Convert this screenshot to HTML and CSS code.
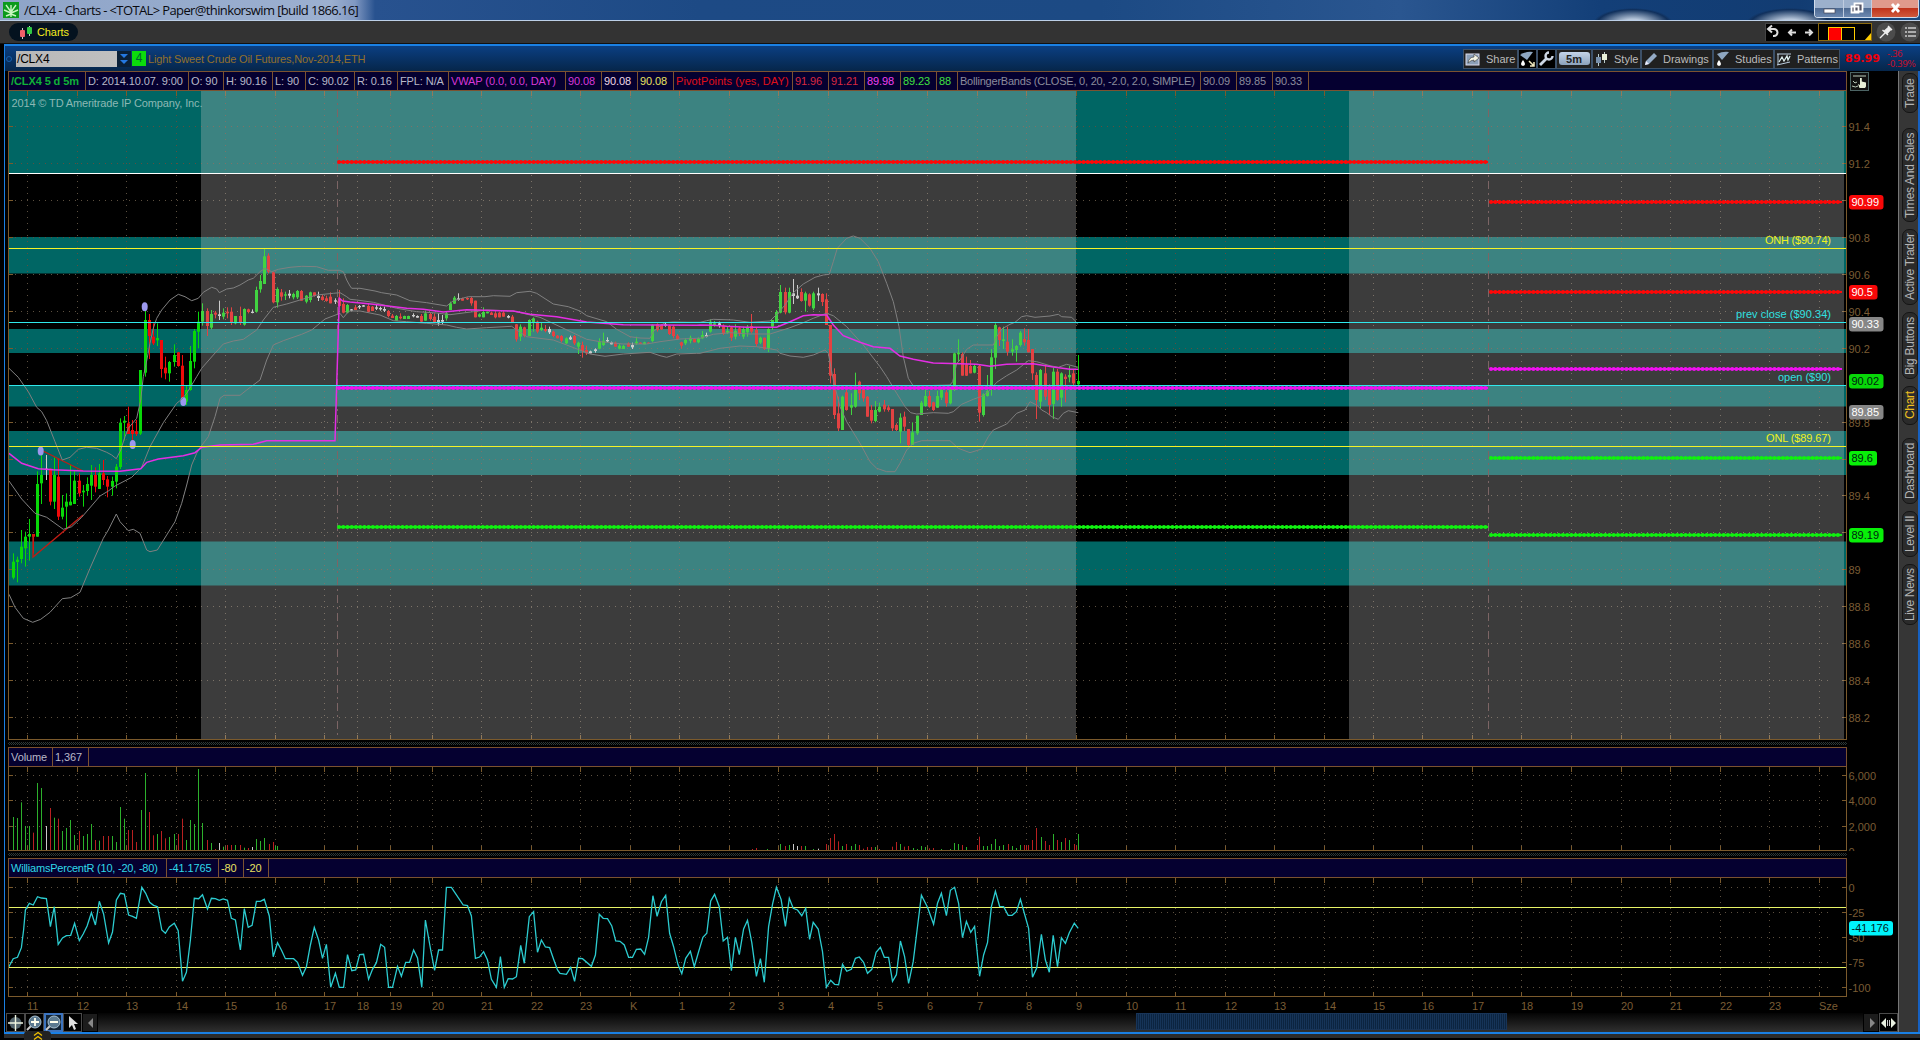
FILE: index.html
```html
<!DOCTYPE html>
<html lang="en">
<head>
<meta charset="utf-8">
<title>/CLX4 - Charts</title>
<link rel="stylesheet" href="styles.css">
</head>
<body>
<header class="titlebar">
  <svg class="app-icon" width="16" height="16" viewBox="0 0 16 16"><rect width="16" height="16" fill="#0c9a1c"/><path d="M8 15V3M8 10L3 3M8 10l5-7M8 11L1 8M8 11l7-3M8 12l-5 2M8 12l5 2" stroke="#c8f5c0" stroke-width="1.4"/></svg>
  <span class="title-text">/CLX4 - Charts - &lt;TOTAL&gt; Paper@thinkorswim [build 1866.16]</span>
  <div class="win-buttons">
    <span class="win-btn min"><svg width="28" height="17"><rect x="9" y="9" width="11" height="4" fill="#fff" stroke="#445" stroke-width=".7"/></svg></span>
    <span class="win-btn max"><svg width="27" height="17"><path d="M10.500 3.500h8v8h-8z M7.500 6.500h7v6h-7z" fill="#556" stroke="#fff" stroke-width="1.800"/></svg></span>
    <span class="win-btn close"><svg width="46" height="17"><path d="M20 4l7 8M27 4l-7 8" stroke="#fff" stroke-width="2.800"/></svg></span>
  </div>
</header>

<nav class="menubar">
  <div class="charts-tab">
    <svg width="15" height="15"><path d="M3.500 3v11M10.500 1v10" stroke="#ccc"/><rect x="1" y="5" width="5" height="7" rx="1" fill="#f0606a"/><rect x="8" y="2" width="5" height="7" rx="1" fill="#30c845"/></svg>
    <span>Charts</span>
  </div>
  <div class="menu-right">
    <div class="nav-box">
      <svg width="52" height="17"><path d="M3 5h5a3.300 3.300 0 0 1 0 7H7M6 1.500L2 5l4 3.500" fill="none" stroke="#ddd" stroke-width="2"/><path d="M30 8.500h-7M26 5.500l-3 3 3 3M39 8.500h7M43 5.500l3 3-3 3" fill="none" stroke="#ddd" stroke-width="2"/></svg>
    </div>
    <div class="color-box">
      <svg width="52" height="17"><rect x="9.500" y="3.500" width="13" height="13" fill="#f00" stroke="#fc0"/><rect x="22.500" y="3.500" width="13" height="13" fill="#000" stroke="#fc0"/><path d="M52 9v8h-7z" fill="#fc0"/></svg>
    </div>
    <svg class="round" width="20" height="20"><circle cx="10" cy="10" r="9.500" fill="#4c4c4c"/><path d="M4 16l5-5M6.500 8l5.500 5M8.500 9L13 5l2 2-4 4.500zM12 4l4 4" stroke="#eee" stroke-width="1.400" fill="#eee"/></svg>
    <svg class="round list" width="20" height="20"><circle cx="10" cy="10" r="9.500" fill="#4c4c4c"/><path d="M5 6h2M8 6h8M5 10h2M8 10h8M5 14h2M8 14h8" stroke="#ccc" stroke-width="1.500"/></svg>
  </div>
</nav>

<section class="symbolbar">
  <i class="dot"></i>
  <span class="symbol">/CLX4</span>
  <span class="dropdown"><svg width="14" height="16"><path d="M3 3h8l-4 4zM3 9h8l-4 4z" fill="#2478e0"/></svg></span>
  <span class="link">4</span>
  <span class="desc">Light Sweet Crude Oil Futures,Nov-2014,ETH</span>
  <div class="tools">
    <span class="tool share"><svg width="16" height="16"><rect x="1" y="3" width="13" height="11" fill="#8ca0b8" stroke="#dde"/><path d="M3 12q1-6 6-6V3l5 4-5 4V9Q6 9 3 12z" fill="#f4f4e4" stroke="#333" stroke-width=".6"/></svg>Share</span>
    <span class="tool dark flask"><svg width="17" height="18"><path d="M1 5q6-4 13-3L8 10z" fill="#8ea6c0"/><path d="M4 10q4 5 0 6-4-1 0-6" fill="#fff"/><path d="M10 11l5 5M15 12v4h-4" stroke="#efe9c0" stroke-width="1.500" fill="none"/></svg></span>
    <span class="tool dark wrench"><svg width="17" height="18"><path d="M2 15l7-7" stroke="#ccd6e4" stroke-width="2.800"/><path d="M14.500 6a3.500 3.500 0 1 1-3.500-3.500" fill="none" stroke="#ccd6e4" stroke-width="2.400"/></svg></span>
    <span class="tool period"><b>5m</b></span>
    <span class="tool style"><svg width="15" height="16"><path d="M4.500 3v12M10.500 1v11" stroke="#bcc"/><rect x="2" y="6" width="5" height="6" fill="#7890ac"/><rect x="8" y="3" width="5" height="6" fill="#e8f0d8"/></svg>Style</span>
    <span class="tool drawings"><svg width="15" height="16"><path d="M2 14l1-4 8-8 3 3-8 8z" fill="#94abc6"/><path d="M2 14l1-4 3 3z" fill="#eef"/></svg>Drawings</span>
    <span class="tool studies"><svg width="15" height="17"><path d="M2 4q6-3 12-2L7 10z" fill="#8ea6c0"/><path d="M4 10q4 5 0 6-4-1 0-6" fill="#fff"/></svg>Studies</span>
    <span class="tool patterns"><svg width="16" height="16"><path d="M1 3h14M2 3v11M1 14l13-3" stroke="#bcd" fill="none"/><path d="M3 11l3-5 2 4 3-5 1 4 2-4" stroke="#dee" stroke-width="1.300" fill="none"/></svg>Patterns</span>
  </div>
  <b class="last">89.99</b>
  <span class="change">-.36<br>-0.39%</span>
</section>

<main class="workspace">
  <div class="panes">
    <div class="pane-head status">
      <span style="width:77px" class="green"><b>/CLX4 5 d 5m</b></span>
      <span style="width:103px">D: 2014.10.07. 9:00</span>
      <span style="width:35px">O: 90</span>
      <span style="width:49px">H: 90.16</span>
      <span style="width:33px">L: 90</span>
      <span style="width:49px">C: 90.02</span>
      <span style="width:43px">R: 0.16</span>
      <span style="width:51px">FPL: N/A</span>
      <span style="width:117px" class="mag">VWAP (0.0, 0.0, DAY)</span>
      <span style="width:36px" class="mag">90.08</span>
      <span style="width:36px" class="pink">90.08</span>
      <span style="width:36px" class="yel">90.08</span>
      <span style="width:119px" class="red">PivotPoints (yes, DAY)</span>
      <span style="width:36px" class="red2">91.96</span>
      <span style="width:36px" class="red2">91.21</span>
      <span style="width:36px" class="mag2">89.98</span>
      <span style="width:36px" class="lime">89.23</span>
      <span style="width:21px" class="lime">88</span>
      <span style="width:243px" class="gray long">BollingerBands (CLOSE, 0, 20, -2.0, 2.0, SIMPLE)</span>
      <span style="width:36px" class="gray">90.09</span>
      <span style="width:36px" class="gray">89.85</span>
      <span style="width:36px" class="gray">90.33</span>
      <svg class="hand" width="19" height="19"><rect x=".5" y=".5" width="18" height="18" fill="#111" stroke="#4c6464"/><path d="M3 4h13M3 9l2 2 2-1M2 14q4 2 6 0" stroke="#bcb" fill="none"/><path d="M9.500 16l-1.500-4 2 1V6h1.800v3.500l4.200 1v4l-1 1.500z" fill="#e8f0d8"/></svg>
    </div>
    <svg id="price" width="1890" height="649" viewBox="8 91 1890 649"></svg>
    <div class="splitter"></div>
    <div class="pane-head volume">
      <span style="width:44px">Volume</span><span style="width:36px">1,367</span>
    </div>
    <svg id="volume" width="1890" height="84" viewBox="8 767 1890 84"></svg>
    <div class="splitter"></div>
    <div class="pane-head williams">
      <span style="width:158px" class="cyan long">WilliamsPercentR (10, -20, -80)</span><span style="width:52px" class="cyan">-41.1765</span><span style="width:25px" class="yel">-80</span><span style="width:25px" class="yel">-20</span>
    </div>
    <svg id="williams" width="1890" height="135" viewBox="8 878 1890 135"></svg>
    <div class="footer">
      <span class="fbtn"><svg width="17" height="18"><circle cx="8.500" cy="9" r="6" fill="#53646c"/><path d="M8.500 1v16M1 9h15" stroke="#eef4e0" stroke-width="1.400"/></svg></span>
      <span class="fbtn"><svg width="17" height="18"><path d="M5 12l-4 4" stroke="#ccc" stroke-width="2"/><circle cx="9" cy="8" r="6" fill="#5c7a90" stroke="#a8c0d0"/><path d="M9 4v8M5 8h8" stroke="#ffe" stroke-width="1.800"/></svg></span>
      <span class="fbtn active"><svg width="17" height="18"><path d="M5 12l-4 4" stroke="#ccc" stroke-width="2"/><circle cx="9" cy="8" r="6" fill="#5c7a90" stroke="#a8c0d0"/><path d="M5 8h8" stroke="#ffe" stroke-width="2"/></svg></span>
      <span class="fbtn"><svg width="17" height="18"><path d="M5 2v12l3-3 2 5 2-1-2-5h4z" fill="#dcdcdc"/></svg></span>
      <span class="arrow"><svg width="15" height="18"><path d="M10 4v10L5 9z" fill="#888"/></svg></span>
      <div class="track"><i class="thumb"></i></div>
      <span class="arrow"><svg width="15" height="18"><path d="M6 4v10l5-5z" fill="#888"/></svg></span>
      <span class="fbtn"><svg width="17" height="18"><path d="M6 4v10L1 9zM11 4v10l5-5z" fill="#e8f0e0"/><path d="M7.500 6v6M9.500 6v6" stroke="#ccc"/></svg></span>
    </div>
  </div>
  <aside class="side">
    <span style="height:40px">Trade</span>
    <span style="height:94px" class="grp">Times And Sales</span>
    <span style="height:76px">Active Trader</span>
    <span style="height:67px">Big Buttons</span>
    <span style="height:39px" class="on">Chart</span>
    <span style="height:66px" class="grp2">Dashboard</span>
    <span style="height:46px">Level II</span>
    <span style="height:61px">Live News</span>
  </aside>
</main>
<div class="bottom-edge">
  <span class="pull"><svg width="10" height="9"><path d="M1 4.500l4-3 4 3M1 8.500l4-3 4 3" stroke="#f0c000" stroke-width="1.300" fill="none"/></svg></span>
</div>
<script src="chart.js"></script>
</body>
</html>
```
FILE: styles.css
```css
* { box-sizing: border-box; }
body { margin: 0; width: 1920px; height: 1040px; overflow: hidden; background: #000; font: 11px "Liberation Sans", Arial, sans-serif; display: flex; flex-direction: column; }
svg { display: block; flex: none; }
text { font: 11px "Liberation Sans", Arial, sans-serif; }

.titlebar { height: 21px; flex: none; display: flex; align-items: center; padding-left: 3px; border-bottom: 1px solid #bcd0e8;
  background: radial-gradient(ellipse 40px 16px at 1633px 24px, #b8c8dc 30%, #10305c 90%, transparent 100%), radial-gradient(ellipse 44px 16px at 1790px 24px, #b8c8dc 30%, #10305c 90%, transparent 100%), linear-gradient(90deg, #8ea4c8 0, #9cb0d0 330px, #8098c2 355px, #28528f 375px, #1d4a85 700px, #1c4a84 1100px, #2a5690 1400px, #133f78 1600px, #123c72 1800px, #1a4a80); }
.title-text { font: 13px "Open Sans", sans-serif; color: #0a0a10; margin-left: 5px; width: 335px; white-space: nowrap; letter-spacing: -.62px; position: relative; top: 0; }
.win-buttons { margin-left: auto; margin-right: 1px; display: flex; align-self: flex-start; border: 1px solid #d0dcec; border-top: 0; border-radius: 0 0 4px 4px; overflow: hidden; }
.win-btn { height: 17px; background: linear-gradient(#9cb0cc 0 45%, #4e6a92 50%, #6c88b0); border-right: 1px solid #c0cce0; }
.win-btn.close { background: linear-gradient(#e09a8c 0 45%, #c0341c 50%, #d05a3c); border: 0; }

.menubar { height: 23px; flex: none; background: #333; display: flex; align-items: center; justify-content: space-between; border-bottom: 1px solid #111; }
.charts-tab { margin-left: 9px; width: 69px; height: 18px; border-radius: 9px; background: #04121f; display: flex; align-items: center; padding-left: 10px; color: #f4ec20; gap: 3px; letter-spacing: -.1px; }
.menu-right { display: flex; align-items: center; height: 22px; }
.nav-box { width: 53px; height: 18px; background: #000; border: 1px solid #444; border-width: 1px 0 0 1px; }
.color-box { width: 54px; height: 18px; background: #000; border: 1px solid #8a6a10; margin-right: 4px; overflow: hidden; }
.round.list { margin-left: 4px; }

.symbolbar { height: 27px; flex: none; margin-left: 4px; border-top: 2px solid #1a80e4; border-left: 1px solid #1a80e4; background: linear-gradient(#0b3f82, #06264a); display: flex; align-items: center; padding-left: 1px; }
.dot { width: 6px; height: 6px; border: 1px solid #1660b0; border-radius: 3px; }
.symbol { width: 101px; height: 16px; margin-left: 4px; padding-left: 1px; background: linear-gradient(90deg, #b8b8b8, #c0c0c0); color: #000; font-size: 12px; line-height: 16px; letter-spacing: -.2px; }
.dropdown { width: 14px; height: 16px; background: #0a2038; }
.link { width: 14px; height: 15px; margin-left: 1px; background: #0cdc0c; color: #063; text-align: center; line-height: 15px; font-size: 12px; }
.desc { margin-left: 2px; color: #93702c; letter-spacing: -.14px; }
.tools { margin-left: auto; display: flex; }
.tool { height: 20px; display: flex; align-items: center; gap: 5px; padding-left: 1px; border: 1px solid #3c5068; background: #202020; color: #bcbcbc; font-size: 11px; }
.tool.dark { background: #000; padding: 0; }
.share { width: 55px; }
.flask, .wrench { width: 19px; }
.period { width: 36px; justify-content: center; padding: 0; }
.period b { width: 31px; height: 13px; border-radius: 3px; background: linear-gradient(#c4d4e8, #8ca2bc); color: #222; text-align: center; line-height: 14px; font-size: 11px; }
.style { width: 49px; }
.drawings { width: 72px; }
.studies { width: 61px; }
.patterns { width: 66px; }
.last { width: 42px; padding-left: 5px; color: #f00008; font: bold 11px "DejaVu Sans", sans-serif; }
.change { width: 38px; padding-left: 5px; color: #c0102c; font: 9px/10px "DejaVu Sans", sans-serif; letter-spacing: -.6px; white-space: nowrap; }

.workspace { display: flex; height: 961px; flex: none; border-left: 1px solid #1a80e4; margin-left: 4px; background: #000; }
.panes { width: 1893px; padding-left: 3px; flex: none; display: flex; flex-direction: column; }
.pane-head { flex: none; width: 1839px; height: 20px; background: #050030; border: 1px solid #7b5230; display: flex; }
.pane-head > span { flex: none; height: 18px; line-height: 18px; padding-left: 2px; border-right: 1px solid #7b5230; white-space: nowrap; overflow: visible; color: #b8b8c8; letter-spacing: -.1px; }
.status { position: relative; }
.hand { position: absolute; left: 1841px; top: 0; }
.pane-head .green { color: #10b038; } .pane-head .mag { color: #d838d8; } .pane-head .mag2 { color: #f040f0; }
.pane-head .pink { color: #f0d8e4; } .pane-head .yel { color: #e8e060; } .pane-head .red { color: #e01018; letter-spacing: .1px; }
.pane-head .red2 { color: #d82840; } .pane-head .lime { color: #40e040; } .pane-head .gray { color: #8c8c9c; } .pane-head .cyan { color: #30d8e8; }
.pane-head .long { letter-spacing: -.22px; }
.splitter { flex: none; width: 1839px; height: 7px; background: conic-gradient(#2c3838 25%, #000 0 50%, #2c3838 0 75%, #000 0) 0 0/2px 2px; border: solid #000; border-width: 2px 0; }
.footer { height: 19px; flex: none; display: flex; margin-left: -2px; background: linear-gradient(#040404, #303030); }
.fbtn { width: 19px; height: 19px; border: 1px solid #4a4a4a; background: #000; }
.fbtn.active { border: 2px solid #3c74c0; background: #123; }
.fbtn.active svg { margin: -1px; }
.arrow { width: 16px; background: #1c1c1c; border: 1px solid #000; }
.track { flex: 1; margin-left: 1px; padding-left: 1037px; }
.thumb { display: block; width: 371px; height: 17px; background: repeating-linear-gradient(90deg, #0c2440 0 1px, #163458 1px 2px); border: 1px solid #183458; }

.side { width: 22px; border-left: 1px solid #777; border-right: 2px solid #1660c0; background: #363636; padding: 2px 0 0 3px; display: flex; flex-direction: column; gap: 7px; }
.side span { width: 16px; flex: none; writing-mode: vertical-rl; transform: rotate(180deg); border: 1px solid #151515; border-radius: 7px; background: #2b2b2b; color: #b4b4b4; font-size: 12px; line-height: 14px; text-align: center; white-space: nowrap; letter-spacing: -.3px; }
.side .grp { margin-top: 8px; }
.side .grp2 { margin-top: 6px; }
.side .on { background: #2b2b2b; color: #f0c020; }

.bottom-edge { height: 8px; flex: none; margin-left: 4px; border-top: 2px solid #1a80e4; background: linear-gradient(#2c2c2c 0 4px, #000 4px); padding-left: 20px; }
.pull { display: flex; justify-content: center; position: relative; top: -3px; width: 27px; height: 10px; background: #222; border-radius: 4px 4px 0 0; }

.grid { stroke: #5c5040; stroke-width: 1; stroke-dasharray: 1 5; fill: none; }
.tick, .frame { stroke: #7b5a2c; stroke-width: 1; fill: none; }
.band { fill: #006664; }
.session { fill: #c8c8c8; fill-opacity: .3; }
.boll { fill: none; stroke: #808080; stroke-width: 1; }
.vwap { fill: none; stroke: #e42ee4; stroke-width: 1.5; }
.wpr { fill: none; stroke: #2cccd0; stroke-width: 1.3; }
.pivot { stroke-width: 4; stroke-linecap: round; stroke-dasharray: .1 4.13; fill: none; }
.axis { fill: #7a5c34; }
```
FILE: chart.js
```js
const NS = 'http://www.w3.org/2000/svg';
const LEFT = 9, RIGHT = 1846;
const COLORS = { g: '#08d808', r: '#f00a0a', w: '#cfcfcf' };

function add(parent, tag, attrs, text) {
  const el = document.createElementNS(NS, tag);
  for (const k in attrs) el.setAttribute(k, attrs[k]);
  if (text !== undefined) el.textContent = text;
  parent.appendChild(el);
  return el;
}
const line = (p, x1, y1, x2, y2, attrs) => add(p, 'line', { x1, y1, x2, y2, ...attrs });

// Converts "x,y x,y ..." given in local units into chart coordinates.
function pts(str, ox, oy, sx, sy) {
  return str.trim().split(/\s+/).map(s => {
    const [x, y] = s.split(',').map(Number);
    return (ox + x / sx).toFixed(1) + ',' + (oy + y / sy).toFixed(1);
  }).join(' ');
}

const HOURS = [[27.5,'11'],[77.5,'12'],[126.5,'13'],[176.5,'14'],[225.5,'15'],[275.5,'16'],[324.5,'17'],[357.5,'18'],[390.5,'19'],[432.5,'20'],[481.5,'21'],[531.5,'22'],[580.5,'23'],[630.5,'K'],[679.5,'1'],[729.5,'2'],[778.5,'3'],[828.5,'4'],[877.5,'5'],[927.5,'6'],[977.5,'7'],[1026.5,'8'],[1076.5,'9'],[1126.5,'10'],[1175.5,'11'],[1225.5,'12'],[1274.5,'13'],[1324.5,'14'],[1373.5,'15'],[1422.5,'16'],[1472.5,'17'],[1521.5,'18'],[1571.5,'19'],[1621.5,'20'],[1670.5,'21'],[1720.5,'22'],[1769.5,'23'],[1819.5,'Sze']];

function grid(svg, top, bottom, ys) {
  HOURS.forEach(([x]) => {
    line(svg, x, top, x, bottom, { class: 'grid' });
    line(svg, x, top, x, top + 5, { class: 'tick' });
    line(svg, x, bottom - 4, x, bottom, { class: 'tick' });
  });
  ys.forEach(y => {
    line(svg, LEFT, y, 1833, y, { class: 'grid' });
    line(svg, LEFT, y, LEFT + 4, y, { class: 'tick' });
    line(svg, RIGHT - 4, y, RIGHT, y, { class: 'tick' });
  });
}
function frame(svg, bottom, top) {
  line(svg, 8.5, top, 8.5, bottom, { class: 'frame' });
  line(svg, 1846.5, top, 1846.5, bottom, { class: 'frame' });
  line(svg, 8, bottom - .5, 1847, bottom - .5, { class: 'frame' });
}
function pill(svg, y, w, label, fill, color, x = 1849) {
  add(svg, 'rect', { x, y: y - 7, width: w, height: 14.5, rx: 3, fill });
  add(svg, 'text', { x: x + 2.5, y: y + 4, fill: color }, label);
}

/* ---------- price ---------- */
const price = document.getElementById('price');
const priceY = p => Math.round(273.8 + (90.6 - p) * 184.7) + .5;
[[91,82.5],[237,36.5],[329,24],[385.5,21],[431,44],[541.5,44]].forEach(([y, height]) =>
  add(price, 'rect', { x: LEFT, y, width: RIGHT - LEFT, height, class: 'band' }));
const levels = [];
for (let p = 91.4; p > 88.1; p -= .2) levels.push(+p.toFixed(1));
grid(price, 91, 739, levels.map(priceY));

// Bars: x, high, body top, body bottom, low, colour (one third of a pixel per unit).
function candles(ox, data) {
  data.trim().split(/\s*;\s*/).filter(Boolean).forEach(row => {
    const [x, h, t, b, l, c] = row.split(' ');
    const cx = Math.floor(ox + x / 3) + .5, y = v => 230 + v / 3;
    line(price, cx, y(h), cx, y(l), { stroke: COLORS[c] });
    add(price, 'rect', { x: cx - 1.5, y: y(t), width: 3, height: Math.max(1.3, (b - t) / 3), fill: COLORS[c] });
  });
}
candles(0, `40 970 995 1043 1048 g;52 980 989 996 1057 g;64 900 950 987 1000 g;76 905 920 955 1010 g;88 867 912 920 992 g;100 912 912 920 970 r;112 724 762 920 920 g;124 665 735 760 822 g;139 675 716 720 750 w;151 715 716 815 826 r;163 682 735 815 837 g;175 685 740 860 870 r;187 795 833 860 868 g;199 790 815 830 895 g;211 705 815 826 826 g;223 722 752 822 822 g;238 730 752 790 800 r;250 765 782 787 830 g;262 742 762 783 797 g;274 705 735 767 810 g;286 712 735 770 787 r;298 702 730 777 777 g;310 690 730 750 765 r;322 738 748 770 802 r;337 740 753 770 797 g;349 702 710 755 775 g;361 565 578 711 717 g;373 558 572 578 632 g;385 530 580 612 612 r;397 570 600 612 640 r;409 570 604 612 618 r;421 420 420 611 615 g;436 238 270 428 440 g;448 252 270 318 387 r;460 280 320 340 345 r;472 280 324 331 348 g;484 330 330 417 443 r;496 380 413 430 448 r;508 393 396 430 455 g;523 343 375 396 410 g;535 366 367 408 410 r;547 375 407 510 520 r;559 465 480 515 525 g;571 348 393 480 482 g;583 297 303 395 415 g;595 245 275 305 355 g;607 220 243 275 287 g;621 235 243 288 318 r;634 240 252 293 298 g;646 243 248 254 265 r;658 212 253 258 270 w;670 235 248 260 268 g;682 232 245 250 265 r;694 232 245 277 285 r;706 258 258 280 283 g;721 230 258 278 285 r;733 235 237 284 287 g;745 236 238 246 250 r;757 238 245 249 250 w;769 170 180 245 248 g;781 135 153 178 188 g;793 55 79 162 162 g;805 70 77 125 130 r;820 125 127 217 220 r;832 172 177 217 233 g;844 177 187 200 212 r;856 185 193 197 210 g;868 180 191 197 205 w;880 188 192 202 208 g;892 180 183 202 207 g;904 180 183 212 212 r;919 195 197 215 220 g;931 185 187 210 217 g;943 187 187 198 200 r;955 185 198 204 213 w;967 195 200 210 212 r;979 197 205 213 215 r;991 187 200 220 220 r;1006 205 211 215 222 w;1018 180 205 228 230 r;1030 205 222 248 250 r;1042 222 225 248 250 g`);
candles(340, `34 237 238 242 242 w;46 225 232 240 240 r;58 225 228 232 237 w;70 225 226 230 230 w;85 220 228 245 247 r;97 228 230 243 243 r;109 225 232 236 240 w;121 230 234 238 242 w;133 230 237 242 246 w;145 240 243 258 262 r;157 252 257 264 264 r;169 255 258 272 272 g;182 250 260 265 268 r;194 257 258 267 267 g;206 257 258 267 267 g;220 250 255 259 262 w;232 256 258 263 263 w;244 252 258 275 277 r;256 242 250 272 272 g;270 248 252 267 272 r;282 250 260 277 277 r;295 250 270 280 287 w;307 255 270 275 283 w;319 245 250 265 272 g;331 215 220 240 240 g;343 198 203 221 222 g;355 190 205 210 212 w;367 203 205 212 212 r;382 202 204 208 210 r;394 200 204 220 227 r;406 212 212 262 262 r;418 250 253 260 262 g;430 232 246 262 262 g;442 245 245 250 250 g;454 245 248 255 255 r;466 245 250 262 265 r;478 245 248 262 262 r;491 243 248 260 260 r;505 255 258 263 265 w;517 255 260 277 277 r;529 282 283 328 335 r;541 283 290 320 333 g;553 290 292 318 322 r;568 268 270 318 318 g;580 262 265 277 305 g;592 272 275 305 310 r;604 278 293 300 303 g;616 285 297 303 307 r;628 290 297 307 312 w;640 302 305 318 322 r;652 315 317 325 325 r;664 315 318 332 337 r;679 322 325 340 342 g;691 317 322 328 330 w;703 315 318 340 345 r;715 335 338 350 372 g;727 335 345 363 383 r;739 347 360 370 375 r;751 362 364 370 370 w;766 355 358 363 368 w;778 325 335 356 358 g;790 308 332 345 348 g;802 322 330 334 337 w;814 335 337 343 343 w;826 335 338 350 350 r;838 342 347 356 358 g;850 345 348 357 357 g;865 337 340 350 350 r;877 338 345 352 357 w;889 320 335 340 345 g;901 337 338 342 342 r;913 335 337 343 343 g;925 337 338 342 342 r;937 283 285 333 337 g;952 280 283 300 305 r;964 282 285 298 300 r;976 278 283 287 290 w;988 285 288 312 315 r;1000 285 290 318 325 r;1012 312 317 328 330 r;1024 335 337 347 355 r;1036 325 330 340 345 g;1051 317 323 332 340 g;1063 325 327 337 337 r;1075 322 325 337 340 g;1087 303 315 325 327 g;1099 308 315 320 322 w;1111 268 275 305 308 g;1123 273 280 285 290 g`);
candles(700, `57 275 280 285 293 w;70 283 287 312 315 r;82 290 303 308 312 g;94 290 292 323 333 r;106 283 303 320 328 g;118 290 295 310 318 r;130 290 297 320 327 g;142 285 290 307 320 g;154 252 288 305 310 r;168 293 300 342 350 r;181 320 323 338 342 g;193 323 323 357 360 r;205 295 297 356 366 g;217 270 270 290 300 g;229 240 246 278 278 g;241 165 186 248 250 g;256 173 186 247 253 r;268 173 186 248 250 g;280 147 190 198 222 w;292 165 197 205 207 w;304 175 186 213 215 r;316 185 190 212 245 g;328 190 193 227 230 r;340 185 190 235 240 g;355 173 190 196 213 w;367 190 192 216 228 r;379 190 208 285 285 r;391 285 285 437 460 r;403 415 432 555 567 r;415 500 550 595 603 r;427 497 500 600 600 g;439 478 487 540 542 r;454 490 525 533 555 g;466 428 480 530 533 g;478 452 455 490 510 r;490 475 480 505 515 r;502 498 500 560 560 r;514 525 540 572 580 r;526 513 540 573 577 g;538 518 530 545 547 g;553 510 524 538 545 r;565 525 532 540 545 r;577 537 537 595 603 r;589 580 585 600 603 r;601 550 563 605 640 g;613 545 560 590 603 r;625 597 597 645 648 r;637 577 607 645 645 g;652 557 557 610 615 g;664 513 518 555 555 g;676 477 498 528 530 g;688 483 498 530 533 r;700 515 517 540 543 r;712 482 498 533 533 g;724 477 480 503 510 g;739 480 487 520 530 r;751 477 478 520 523 g;763 368 370 480 483 g;775 328 368 373 397 g;787 367 372 437 437 r;799 380 403 437 438 r;811 390 408 430 430 r;823 402 408 428 430 g;838 405 408 548 575 r;850 490 493 555 560 g;862 435 483 498 500 g;874 357 382 470 497 g;886 280 285 383 417 g;898 290 292 330 348 r;910 290 328 333 357 g;922 290 335 365 377 r;937 328 358 365 377 g;949 345 348 360 395 g;961 303 308 345 350 g;973 295 327 337 347 r;985 297 330 367 367 r;997 357 357 430 450 r;1009 427 435 510 567 r;1021 417 420 515 535 g;1036 403 430 500 510 r;1048 463 470 525 555 r;1060 413 425 522 567 g;1072 417 425 510 512 r;1084 427 430 503 530 g;1096 433 440 447 517 r;1108 408 435 442 457 g;1120 420 430 460 470 r;1135 375 453 463 465 g`);

add(price, 'path', { d: 'M33 534V557L83 515M41 450L83 471', stroke: '#c01c14', 'stroke-width': 1.3, fill: 'none' });
[[144.7,306.7],[132.7,444.5],[40.7,451],[183.3,401.5]].forEach(([cx, cy]) => add(price, 'ellipse', { cx, cy, rx: 3, ry: 4.5, fill: '#9c98ee' }));
[337.5, 1488.5].forEach(x => line(price, x, 91, x, 739, { stroke: '#5c3c3c', 'stroke-dasharray': '8 4 2 4' }));
[[201, 1076], [1349, 1844]].forEach(([a, b]) => add(price, 'rect', { x: a, y: 91, width: b - a, height: 648, class: 'session' }));

add(price, 'polyline', { class: 'boll', points:
  pts(`27,415 55,442 85,485 110,532 125,545 140,572 165,635 187,690 210,682 235,658 260,652 290,655 320,667 335,675 349,686 362,660 375,620 385,595 410,565 422,510 430,440 437,408 450,340 460,295 470,265 485,240 510,210 535,193 555,200 575,212 595,205 610,187 635,172 650,177 658,188 680,177 700,174 720,165 745,150 760,145 780,125 795,115 815,125 835,118 870,112 905,109 950,110 985,121 1018,121 1030,125 1040,150 1050,168`, 0, 230, 3, 3) + ' ' +
  pts(`35,175 60,175 105,183 125,188 170,195 210,212 260,218 320,228 340,212 385,200 435,200 460,197 510,199 530,188 570,184 590,190 640,222 685,230 720,243 740,257 800,275 830,298 870,320 900,324 930,325 940,305 960,288 975,278 1000,276 1050,277 1080,277`, 340, 230, 3, 3) + ' ' +
  pts(`20,272 40,268 100,270 150,277 210,273 235,248 255,225 280,188 310,162 345,142 370,135 388,133 400,95 412,55 440,25 460,18 480,25 510,55 535,95 560,160 580,215 597,290 610,380 625,445 640,468 750,465 758,455 770,400 780,390 800,358 820,345 880,345 890,320 905,297 930,283 945,277 965,260 980,257 1005,262 1050,258 1075,253 1085,260 1115,262 1125,272 1133,283`, 700, 230, 3, 3) });
add(price, 'polyline', { class: 'boll', points:
  pts(`27,753 65,807 105,850 140,862 190,898 215,890 245,862 300,798 325,783 345,768 395,742 425,712 450,650 490,578 530,520 545,508 560,490 590,440 605,415 640,375 670,342 700,333 730,328 770,300 790,270 820,232 860,222 900,210 950,195 1000,190 1020,188 1040,200`, 0, 230, 3, 3) + ' ' +
  pts(`30,208 50,210 100,217 170,235 230,245 290,249 330,254 400,245 440,240 520,243 600,262 660,290 740,328 780,335 850,342 920,342 960,335 1020,327 1070,325`, 340, 230, 3, 3) + ' ' +
  pts(`0,325 40,313 90,308 150,312 210,312 270,293 310,278 340,265 379,250 400,257 440,290 490,345 540,410 560,440 590,490 615,530 632,548 650,552 700,548 745,550 760,545 785,523 820,508 850,497 870,480 890,457 920,437 950,420 985,392 1010,395 1050,407 1075,412 1100,403 1135,412`, 700, 230, 3, 3) });
add(price, 'polyline', { class: 'boll', points:
  pts(`27,1093 45,1132 70,1165 98,1177 122,1168 150,1147 187,1106 212,1103 240,1087 270,1015 310,925 325,900 349,852 360,875 385,902 400,898 420,910 432,940 440,960 450,965 472,960 500,915 525,875 545,820 560,765 575,705 590,670 600,653 625,620 645,560 660,505 672,496 720,496 740,480 780,450 800,390 820,345 850,332 905,313 935,300 975,267 1020,250 1030,263 1045,245`, 0, 230, 3, 3) + ' ' +
  pts(`30,243 60,243 120,255 160,272 200,275 260,280 320,285 350,292 380,297 440,293 515,289 530,300 560,320 640,330 680,345 750,372 795,379 850,372 930,367 960,377 980,382 1010,372 1070,370`, 340, 230, 3, 3) + ' ' +
  pts(`0,370 60,355 120,348 170,350 190,353 230,360 240,370 270,378 310,382 340,375 375,360 385,370 400,450 420,530 440,575 480,640 510,695 530,715 560,725 585,725 600,700 620,660 640,640 665,632 750,632 775,655 810,668 845,657 865,620 880,600 920,582 950,550 975,540 990,515 1010,525 1025,540 1040,548 1055,560 1075,568 1090,550 1105,542 1135,548`, 700, 230, 3, 3) });
add(price, 'polyline', { class: 'vwap', points:
  pts(`27,670 65,700 115,716 160,719 250,723 360,724 422,716 440,697 475,687 550,677 585,668 605,652 660,645 760,643 800,632 1005,632 1018,205 1028,213 1050,216`, 0, 230, 3, 3) + ' ' +
  pts(`100,223 200,235 250,238 310,246 380,239 430,241 520,243 570,253 650,260 740,276 850,284 1070,286`, 340, 230, 3, 3) + ' ' +
  pts(`0,285 40,286 80,289 140,292 230,292 270,275 310,257 340,254 380,255 400,285 430,317 480,337 520,350 570,355 600,378 640,388 700,399 830,403 870,409 920,403 1000,401 1060,411 1110,418 1135,418`, 700, 230, 3, 3) });

[[173.5,'#fff'],[248.5,'#f4f428'],[322.5,'#30e8ec'],[385.5,'#30e8ec'],[446.5,'#f4f428']].forEach(([y, stroke]) => line(price, LEFT, y, RIGHT, y, { stroke, 'stroke-width': 1.2 }));
[[338,1488,162,'#ff0808'],[338,1488,388,'#f010f0'],[338,1488,527,'#10f010'],[1490,1842,202,'#ff0808'],[1490,1842,292,'#ff0808'],[1490,1842,369,'#f010f0'],[1490,1842,458,'#10f010'],[1490,1842,535,'#10f010']].forEach(([a, b, y, stroke]) => {
  line(price, a, y, b, y, { stroke, 'stroke-width': 2 });
  line(price, a + 1, y, b, y, { stroke, class: 'pivot' });
});
[['ONH ($90.74)',244,'#f0f020',66],['prev close ($90.34)',318,'#30e0e0',95],['open ($90)',381,'#30e0e0',53],['ONL ($89.67)',442,'#f0f020',65]].forEach(([t, y, fill, w]) =>
  add(price, 'text', { x: 1831 - w, y, fill, textLength: w }, t));
add(price, 'text', { x: 11.5, y: 107, fill: '#8cb8b4', textLength: 191 }, '2014 © TD Ameritrade IP Company, Inc.');
frame(price, 740, 91);
levels.filter(p => ![91, 90, 89.6, 89.2].includes(p)).forEach(p => add(price, 'text', { x: 1848.5, y: priceY(p) + 4, class: 'axis' }, p));
pill(price, 202, 34.5, '90.99', '#f80808', '#fff');
pill(price, 292, 28.5, '90.5', '#f80808', '#fff');
pill(price, 324, 34.5, '90.33', '#868686', '#fff');
pill(price, 381, 34.5, '90.02', '#08d808', '#021');
pill(price, 412, 34.5, '89.85', '#868686', '#fff');
pill(price, 458, 28, '89.6', '#08f008', '#021');
pill(price, 535, 34.5, '89.19', '#08f008', '#021');

/* ---------- volume ---------- */
const volume = document.getElementById('volume');
grid(volume, 767, 850, [775.5, 800.5, 826.5]);
function bars(ox, data) {
  data.trim().split(/\s+/).forEach(s => {
    const [, x, y, c] = s.match(/(\d+):(\d+)(\w)/);
    const cx = Math.floor(ox + x / 2.8) + .5;
    line(volume, cx, 720 + y / 3, cx, 850, { stroke: { g: '#2cb02c', r: '#b82020', w: '#c8c8c8' }[c] });
  });
}
bars(0, '37:291g 49:294g 60:247g 71:318g 82:318g 93:338r 105:189g 116:204g 130:318w 141:264r 152:293g 163:296r 175:333g 186:324g 197:300g 208:345g 222:333r 233:348g 244:342g 256:312g 267:360r 278:362g 290:348r 303:348r 315:348g 326:366g 337:261g 348:296g 360:330r 371:330r 382:366r 396:270g 407:159g 418:276r 430:346r 441:342g 452:333r 463:355r 474:351g 488:342g 499:342r 511:296r 522:360g 533:300g 544:312g 556:147g 567:309g 580:360r 592:369g 603:387r 614:369w 625:380g 636:375r 648:375r 659:375g 673:375r 684:383g 695:384r 706:381w 718:357g 729:363g 740:354g 754:372r 765:366r 771:378g 777:378g');
bars(560, '540:387r 551:384r 582:387g 617:372g 632:378r 642:375g 653:372w 664:378w 676:378r 687:378g 709:387g 723:386w 746:372r 757:354r 768:342r 780:364r 791:378g 802:372r 816:378g 827:372g 838:375r 850:386r 861:381r 872:381r 884:381g 895:387r 930:380r 942:366r 953:372g 964:380r 976:378r 989:384g 1000:387g 1012:378g 1023:381g 1034:385r 1045:384r 1068:387g 1093:387g 1104:369g 1115:372g 1127:375r 1138:381g 1169:375r 1175:350r 1185:378g 1197:378g 1208:372g 1219:357g 1230:378g 1241:375g 1256:372r 1267:378g 1278:384g 1289:375g 1300:375r 1307:378r 1312:375r 1323:360r 1335:324r 1348:351g 1359:363r 1370:375r 1381:342g 1392:360r 1404:366g 1415:354r 1426:360g 1440:372r 1446:378r 1451:342g');
frame(volume, 851, 767);
[['6,000', 780], ['4,000', 805], ['2,000', 831], ['0', 856]].forEach(([t, y]) => add(volume, 'text', { x: 1848.5, y, class: 'axis' }, t));

/* ---------- Williams %R ---------- */
const wpr = document.getElementById('williams');
grid(wpr, 878, 996, [887.5, 912.5, 937.5, 962.5, 987.5]);
[907.5, 967.5].forEach(y => line(wpr, LEFT, y, RIGHT, y, { stroke: '#e8f468' }));
add(wpr, 'polyline', { class: 'wpr', points:
  pts(`25,740 37,716 49,712 60,683 66,630 71,570 82,550 93,555 105,530 116,534 130,536 141,620 152,560 163,673 175,654 186,647 198,646 209,610 222,662 233,642 244,618 256,578 267,615 278,544 290,582 304,669 315,636 326,540 337,520 348,522 360,585 371,589 382,595 397,502 408,520 419,547 430,556 441,560 453,630 463,640 474,621 488,610 499,632 511,784 522,757 533,660 544,535 556,536 567,524 581,567 592,535 603,536 614,541 625,537 637,541 648,595 659,600 673,690 684,566 695,622 706,616 718,544 729,544 740,538 754,588 765,710 777,668 788,690 799,716 822,716 833,727 847,766 858,740 869,675 880,622 892,660 903,715 914,673 926,802 939,760 950,802 962,802 973,704 985,752 996,750 1007,704 1018,703 1032,778 1043,748 1054,728 1066,673 1077,682 1088,802 1099,802 1113,739 1124,769 1136,727 1147,727 1158,690 1169,714 1181,802 1191,600 1206,690 1217,751 1228,690 1239,690 1250,502 1264,502 1275,520 1297,555 1309,557 1320,588 1331,715 1343,711 1354,695 1365,720 1376,778 1390,802 1401,710 1412,802 1423,776 1435,777 1446,770 1458,676 1468,730 1482,590 1494,575 1505,697 1516,660 1527,681 1539,683 1550,718 1561,750 1568,760`, 0, 720, 2.8, 3) + ' ' +
  pts(`18,763 30,742 41,784 52,715 63,716 88,739 99,705 110,583 121,595 133,596 145,618 156,663 168,664 180,675 192,712 203,712 214,688 226,687 237,703 248,652 260,527 272,589 284,545 296,526 307,640 318,680 330,733 341,761 352,715 365,694 376,740 388,695 400,652 411,640 422,543 433,523 446,560 457,663 469,652 480,752 491,652 502,704 514,627 525,601 537,668 550,769 561,716 572,787 584,620 595,553 606,502 619,538 631,619 642,535 653,565 665,570 677,587 688,565 699,658 709,607 723,627 735,695 746,802 758,781 769,793 780,794 791,733 803,754 816,748 827,715 838,711 850,727 861,760 873,748 885,697 897,682 908,712 920,712 931,784 942,764 953,663 965,710 976,790 989,725 1000,630 1012,526 1029,562 1046,613 1057,550 1068,520 1082,587 1093,511 1105,502 1116,550 1127,653 1138,604 1150,637 1161,619 1175,769 1186,705 1197,668 1208,560 1219,514 1231,559 1242,560 1255,586 1266,586 1278,575 1289,538 1312,625 1323,772 1335,743 1348,643 1359,720 1370,757 1381,646 1393,740 1404,653 1415,670 1426,638 1440,610 1451,625`, 560, 720, 2.8, 3) });
frame(wpr, 997, 878);
[['0', 892], ['-25', 917], ['-50', 942], ['-75', 967], ['-100', 992]].forEach(([t, y]) => add(wpr, 'text', { x: 1848.5, y, class: 'axis' }, t));
pill(wpr, 928, 44, '-41.176', '#00f4fc', '#022');
HOURS.forEach(([x, t]) => add(wpr, 'text', { x: x - .5, y: 1010, class: 'axis' }, t));
```
